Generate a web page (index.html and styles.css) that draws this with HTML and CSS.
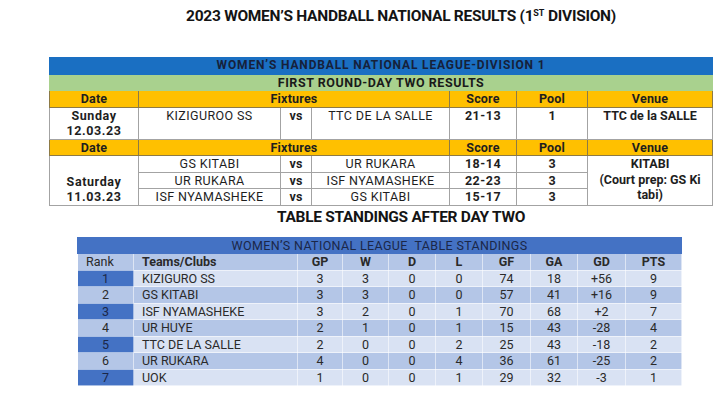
FILE: index.html
```html
<!DOCTYPE html>
<html>
<head>
<meta charset="utf-8">
<link rel="stylesheet" href="styles.css">
</head>
<body>
<div class="heading"><h1 class="title">2023 WOMEN’S HANDBALL NATIONAL RESULTS (1<sup class="sup">ST</sup> DIVISION)</h1></div>
<table class="results">
  <colgroup>
    <col class="c-date"><col class="c-team1"><col class="c-vs"><col class="c-team2"><col class="c-score"><col class="c-pool"><col class="c-venue">
  </colgroup>
  <tr class="band-blue"><td colspan="7">WOMEN’S HANDBALL NATIONAL LEAGUE-DIVISION 1</td></tr>
  <tr class="band-green"><td colspan="7">FIRST ROUND-DAY TWO RESULTS</td></tr>
  <tr class="hdr"><td>Date</td><td colspan="3">Fixtures</td><td>Score</td><td>Pool</td><td>Venue</td></tr>
  <tr class="match tall">
    <td class="date">Sunday<br>12.03.23</td>
    <td class="team">KIZIGUROO SS</td>
    <td class="vs">vs</td>
    <td class="team">TTC DE LA SALLE</td>
    <td class="score">21-13</td>
    <td class="pool">1</td>
    <td class="venue">TTC de la SALLE</td>
  </tr>
  <tr class="hdr"><td>Date</td><td colspan="3">Fixtures</td><td>Score</td><td>Pool</td><td>Venue</td></tr>
  <tr class="match">
    <td class="date bottom" rowspan="3">Saturday<br>11.03.23</td>
    <td class="team">GS KITABI</td>
    <td class="vs">vs</td>
    <td class="team">UR RUKARA</td>
    <td class="score">18-14</td>
    <td class="pool">3</td>
    <td class="venue" rowspan="3">KITABI<br>(Court prep: GS Ki<br>tabi)</td>
  </tr>
  <tr class="match">
    <td class="team">UR RUKARA</td>
    <td class="vs">vs</td>
    <td class="team">ISF NYAMASHEKE</td>
    <td class="score">22-23</td>
    <td class="pool">3</td>
  </tr>
  <tr class="match">
    <td class="team">ISF NYAMASHEKE</td>
    <td class="vs">vs</td>
    <td class="team">GS KITABI</td>
    <td class="score">15-17</td>
    <td class="pool">3</td>
  </tr>
</table>
<div class="heading"><h2 class="subtitle">TABLE STANDINGS AFTER DAY TWO</h2></div>
<table class="standings">
  <colgroup>
    <col class="s-rank"><col class="s-team"><col class="s-gp"><col class="s-w"><col class="s-d"><col class="s-l"><col class="s-gf"><col class="s-ga"><col class="s-gd"><col class="s-pts">
  </colgroup>
  <tr class="s-band"><td colspan="10">WOMEN’S NATIONAL LEAGUE&nbsp; TABLE STANDINGS</td></tr>
  <tr class="s-head"><td class="rank-h">Rank</td><td class="name b">Teams/Clubs</td><td class="b">GP</td><td class="b">W</td><td class="b">D</td><td class="b">L</td><td class="b">GF</td><td class="b">GA</td><td class="b">GD</td><td class="b">PTS</td></tr>
  <tr class="odd"><td class="rank">1</td><td class="name">KIZIGURO SS</td><td>3</td><td>3</td><td>0</td><td>0</td><td>74</td><td>18</td><td>+56</td><td>9</td></tr>
  <tr class="even"><td class="rank">2</td><td class="name">GS KITABI</td><td>3</td><td>3</td><td>0</td><td>0</td><td>57</td><td>41</td><td>+16</td><td>9</td></tr>
  <tr class="odd"><td class="rank">3</td><td class="name">ISF NYAMASHEKE</td><td>3</td><td>2</td><td>0</td><td>1</td><td>70</td><td>68</td><td>+2</td><td>7</td></tr>
  <tr class="even"><td class="rank">4</td><td class="name">UR HUYE</td><td>2</td><td>1</td><td>0</td><td>1</td><td>15</td><td>43</td><td>-28</td><td>4</td></tr>
  <tr class="odd"><td class="rank">5</td><td class="name">TTC DE LA SALLE</td><td>2</td><td>0</td><td>0</td><td>2</td><td>25</td><td>43</td><td>-18</td><td>2</td></tr>
  <tr class="even"><td class="rank">6</td><td class="name">UR RUKARA</td><td>4</td><td>0</td><td>0</td><td>4</td><td>36</td><td>61</td><td>-25</td><td>2</td></tr>
  <tr class="odd"><td class="rank">7</td><td class="name">UOK</td><td>1</td><td>0</td><td>0</td><td>1</td><td>29</td><td>32</td><td>-3</td><td>1</td></tr>
</table>
</body>
</html>
```
FILE: styles.css
```css
html, body { margin: 0; padding: 0; background: #ffffff; }
body { font-family: Roboto, "Liberation Sans", sans-serif; color: #1e1e1e; width: 720px; }

.heading { padding-left: 82px; text-align: center; }
.title { margin: 6px 0 0 0; font-size: 15.5px; line-height: 20px; font-weight: 700; color: #141414; letter-spacing: -0.28px; }
.sup { font-size: 9px; vertical-align: 5px; line-height: 0; letter-spacing: 0; }
.subtitle { margin: 1px 0 0 0; font-size: 15.5px; line-height: 20px; font-weight: 700; color: #141414; letter-spacing: -0.3px; }

.results { margin: 31px 0 0 49px; width: 663px; table-layout: fixed; border-collapse: collapse; font-size: 12.5px; }
.c-date { width: 89px; }
.c-team1 { width: 142px; }
.c-vs { width: 31px; }
.c-team2 { width: 138px; }
.c-score { width: 67px; }
.c-pool { width: 71px; }
.c-venue { width: 125px; }
.results td { padding: 0; line-height: 15.5px; text-align: center; border: 1px solid #a3a3a3; white-space: nowrap; overflow: hidden; }
.band-blue td { background: #1a6fc2; color: #16213a; font-weight: 700; font-size: 12px; letter-spacing: 0.85px; border-color: #1a6fc2; }
.band-green td { background: #a9d18e; color: #1a1a1a; font-weight: 700; font-size: 12.5px; letter-spacing: 0.55px; border-color: #a9d18e; }
.hdr td { background: #ffc000; font-weight: 700; color: #1e1e1e; border-color: #8d7a45; letter-spacing: 0.2px; }
.match td { background: #ffffff; vertical-align: top; }
.tall td { height: 31px; }
.date { font-weight: 700; letter-spacing: 0.6px; }
.date.bottom { vertical-align: bottom !important; }
.team { letter-spacing: 0.4px; }
.vs { font-weight: 700; }
.score { font-weight: 700; letter-spacing: 0.5px; }
.pool { font-weight: 700; }
.venue { font-weight: 700; letter-spacing: 0; }

.standings { margin: 10px 0 0 77px; width: 604px; table-layout: fixed; border-collapse: collapse; font-size: 12.5px; color: #2a2a2a; }
.s-rank { width: 56px; }
.s-team { width: 164px; }
.s-gp { width: 45px; }
.s-w { width: 46px; }
.s-d { width: 47px; }
.s-l { width: 47px; }
.s-gf { width: 48px; }
.s-ga { width: 47px; }
.s-gd { width: 48px; }
.s-pts { width: 56px; }
.standings td { padding: 0; line-height: 15.5px; text-align: center; border: 1px solid rgba(255,255,255,0.55); white-space: nowrap; }
.s-band td { background: #4472c4; color: #1b2748; letter-spacing: 0.35px; border-color: #4472c4; }
.s-head td { background: #b4c6e7; }
.s-head .b { font-weight: 700; }
.standings .rank-h { text-align: left; padding-left: 8px; }
.standings .name { text-align: left; padding-left: 8px; }
.odd td { background: #d9e2f3; }
.even td { background: #b4c6e7; }
.odd .rank { background: #4472c4; color: #1b2748; }
```
